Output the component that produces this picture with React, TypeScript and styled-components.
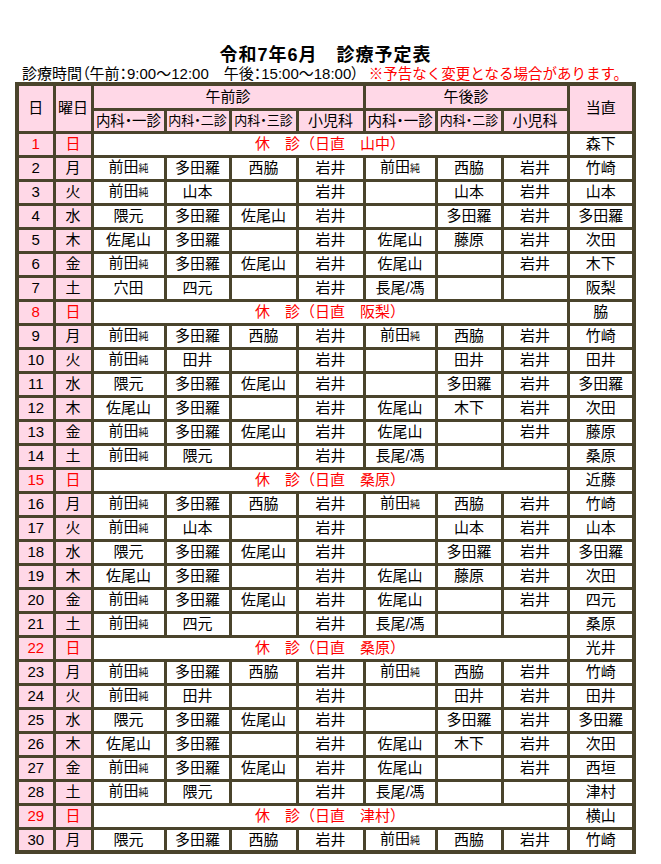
import React from 'react'
import styled, { createGlobalStyle } from 'styled-components'

const GlobalStyle = createGlobalStyle`
  body {
    margin: 0;
    background: #ffffff;
    font-family: "Liberation Sans", "Noto Sans CJK JP", sans-serif;
    color: #000000;
  }
`

const LINE = '#4a442c'
const PINK = '#ffd8e7'
const RED = '#ff0000'

const Page = styled.div`
  width: 661px;
  padding: 44px 0 0 15px;
  box-sizing: border-box;
`

const Title = styled.h1`
  width: 621px;
  margin: 0;
  text-align: center;
  font-size: 18px;
  line-height: 22px;
  font-weight: bold;
  letter-spacing: 1px;
`

const Note = styled.div`
  padding-left: 7px;
  font-size: 15px;
  line-height: 16px;
  white-space: nowrap;
  font-feature-settings: "palt";
`

const Warn = styled.span`
  margin-left: -5px;
  color: ${RED};
  font-size: 14.5px;
  font-feature-settings: normal;
`

const Sheet = styled.table`
  width: 621px;
  table-layout: fixed;
  border-collapse: collapse;
  border: 4px solid ${LINE};
`

const HeadCell = styled.th<{ $size?: number }>`
  background: ${PINK};
  border: 3px solid ${LINE};
  padding: 0;
  font-weight: normal;
  font-size: ${p => p.$size || 15}px;
  line-height: 18px;
  text-align: center;
  white-space: nowrap;
  overflow: hidden;
  font-feature-settings: "palt";
`

const HeadRow = styled.tr<{ $h: number }>`
  height: ${p => p.$h}px;
`

const Row = styled.tr`
  height: 24px;
`

const DayCell = styled.td<{ $red?: boolean }>`
  background: ${PINK};
  border: 3px solid ${LINE};
  padding: 0;
  font-size: 15px;
  line-height: 18px;
  text-align: center;
  color: ${p => (p.$red ? RED : '#000000')};
`

const NameCell = styled.td`
  border: 3px solid ${LINE};
  padding: 0;
  font-size: 15px;
  line-height: 18px;
  text-align: center;
  white-space: nowrap;
  overflow: hidden;
`

const HolidayCell = styled(NameCell)`
  color: ${RED};
`

const Small = styled.span`
  font-size: 10px;
`

const cols = [37, 38, 73, 65, 67, 67, 72, 66, 66, 66]

type Day = {
    d: number
    w: string
    off?: string
    cells?: string[]
    duty: string
}

const days: Day[] = [
    { d: 1, w: '日', off: '山中', duty: '森下' },
    { d: 2, w: '月', cells: ['前田純', '多田羅', '西脇', '岩井', '前田純', '西脇', '岩井'], duty: '竹崎' },
    { d: 3, w: '火', cells: ['前田純', '山本', '', '岩井', '', '山本', '岩井'], duty: '山本' },
    { d: 4, w: '水', cells: ['隈元', '多田羅', '佐尾山', '岩井', '', '多田羅', '岩井'], duty: '多田羅' },
    { d: 5, w: '木', cells: ['佐尾山', '多田羅', '', '岩井', '佐尾山', '藤原', '岩井'], duty: '次田' },
    { d: 6, w: '金', cells: ['前田純', '多田羅', '佐尾山', '岩井', '佐尾山', '', '岩井'], duty: '木下' },
    { d: 7, w: '土', cells: ['穴田', '四元', '', '岩井', '長尾/馮', '', ''], duty: '阪梨' },
    { d: 8, w: '日', off: '阪梨', duty: '脇' },
    { d: 9, w: '月', cells: ['前田純', '多田羅', '西脇', '岩井', '前田純', '西脇', '岩井'], duty: '竹崎' },
    { d: 10, w: '火', cells: ['前田純', '田井', '', '岩井', '', '田井', '岩井'], duty: '田井' },
    { d: 11, w: '水', cells: ['隈元', '多田羅', '佐尾山', '岩井', '', '多田羅', '岩井'], duty: '多田羅' },
    { d: 12, w: '木', cells: ['佐尾山', '多田羅', '', '岩井', '佐尾山', '木下', '岩井'], duty: '次田' },
    { d: 13, w: '金', cells: ['前田純', '多田羅', '佐尾山', '岩井', '佐尾山', '', '岩井'], duty: '藤原' },
    { d: 14, w: '土', cells: ['前田純', '隈元', '', '岩井', '長尾/馮', '', ''], duty: '桑原' },
    { d: 15, w: '日', off: '桑原', duty: '近藤' },
    { d: 16, w: '月', cells: ['前田純', '多田羅', '西脇', '岩井', '前田純', '西脇', '岩井'], duty: '竹崎' },
    { d: 17, w: '火', cells: ['前田純', '山本', '', '岩井', '', '山本', '岩井'], duty: '山本' },
    { d: 18, w: '水', cells: ['隈元', '多田羅', '佐尾山', '岩井', '', '多田羅', '岩井'], duty: '多田羅' },
    { d: 19, w: '木', cells: ['佐尾山', '多田羅', '', '岩井', '佐尾山', '藤原', '岩井'], duty: '次田' },
    { d: 20, w: '金', cells: ['前田純', '多田羅', '佐尾山', '岩井', '佐尾山', '', '岩井'], duty: '四元' },
    { d: 21, w: '土', cells: ['前田純', '四元', '', '岩井', '長尾/馮', '', ''], duty: '桑原' },
    { d: 22, w: '日', off: '桑原', duty: '光井' },
    { d: 23, w: '月', cells: ['前田純', '多田羅', '西脇', '岩井', '前田純', '西脇', '岩井'], duty: '竹崎' },
    { d: 24, w: '火', cells: ['前田純', '田井', '', '岩井', '', '田井', '岩井'], duty: '田井' },
    { d: 25, w: '水', cells: ['隈元', '多田羅', '佐尾山', '岩井', '', '多田羅', '岩井'], duty: '多田羅' },
    { d: 26, w: '木', cells: ['佐尾山', '多田羅', '', '岩井', '佐尾山', '木下', '岩井'], duty: '次田' },
    { d: 27, w: '金', cells: ['前田純', '多田羅', '佐尾山', '岩井', '佐尾山', '', '岩井'], duty: '西垣' },
    { d: 28, w: '土', cells: ['前田純', '隈元', '', '岩井', '長尾/馮', '', ''], duty: '津村' },
    { d: 29, w: '日', off: '津村', duty: '横山' },
    { d: 30, w: '月', cells: ['隈元', '多田羅', '西脇', '岩井', '前田純', '西脇', '岩井'], duty: '竹崎' },
]

// "前田純" の「純」だけ小さく
const name = (s: string) => {
    if (s.endsWith('純')) {
        return <>{s.slice(0, -1)}<Small>純</Small></>
    }
    return s
}

function App() {
    return (
        <>
            <GlobalStyle />
            <Page>
                <Title>令和7年6月　診療予定表</Title>
                <Note>
                    診療時間（午前：9:00～12:00　午後：15:00～18:00）　<Warn>※予告なく変更となる場合があります。</Warn>
                </Note>
                <Sheet>
                    <colgroup>
                        {cols.map((w, i) => <col key={i} style={{ width: w }} />)}
                    </colgroup>
                    <thead>
                        <HeadRow $h={25}>
                            <HeadCell rowSpan={2}>日</HeadCell>
                            <HeadCell rowSpan={2}>曜日</HeadCell>
                            <HeadCell colSpan={4}>午前診</HeadCell>
                            <HeadCell colSpan={3}>午後診</HeadCell>
                            <HeadCell rowSpan={2}>当直</HeadCell>
                        </HeadRow>
                        <HeadRow $h={23}>
                            <HeadCell $size={14.5}>内科・一診</HeadCell>
                            <HeadCell $size={13}>内科・二診</HeadCell>
                            <HeadCell $size={13}>内科・三診</HeadCell>
                            <HeadCell>小児科</HeadCell>
                            <HeadCell $size={14.5}>内科・一診</HeadCell>
                            <HeadCell $size={13}>内科・二診</HeadCell>
                            <HeadCell>小児科</HeadCell>
                        </HeadRow>
                    </thead>
                    <tbody>
                        {days.map((day) => (
                            <Row key={day.d}>
                                <DayCell $red={!!day.off}>{day.d}</DayCell>
                                <DayCell $red={!!day.off}>{day.w}</DayCell>
                                {day.off ? (
                                    <HolidayCell colSpan={7}>休　診（日直　{day.off}）</HolidayCell>
                                ) : (
                                    day.cells!.map((c, i) => <NameCell key={i}>{name(c)}</NameCell>)
                                )}
                                <NameCell>{day.duty}</NameCell>
                            </Row>
                        ))}
                    </tbody>
                </Sheet>
            </Page>
        </>
    )
}

export default App
